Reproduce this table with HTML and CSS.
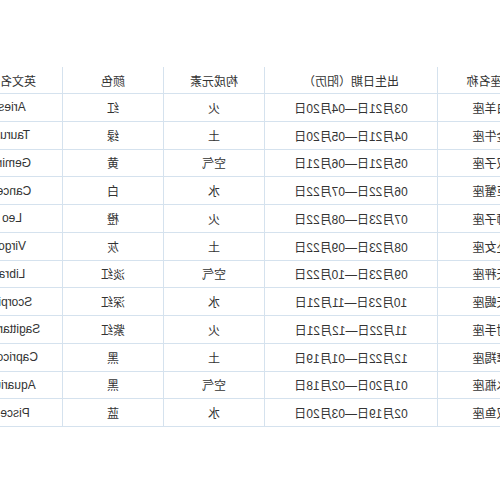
FILE: index.html
```html
<!DOCTYPE html>
<html lang="zh-CN">
<head>
<meta charset="utf-8">
<title>星座表</title>
<link rel="stylesheet" href="styles.css">
</head>
<body>
<div class="page">
  <table class="zodiac">
    <colgroup>
      <col class="c-name"><col class="c-date"><col class="c-elem"><col class="c-color"><col class="c-en">
    </colgroup>
    <thead>
      <tr><th>星座名称</th><th>出生日期（阳历）</th><th>构成元素</th><th>颜色</th><th>英文名称</th></tr>
    </thead>
    <tbody>
      <tr><td>白羊座</td><td>03月21日—04月20日</td><td>火</td><td>红</td><td>Aries</td></tr>
      <tr><td>金牛座</td><td>04月21日—05月20日</td><td>土</td><td>绿</td><td>Taurus</td></tr>
      <tr><td>双子座</td><td>05月21日—06月21日</td><td>空气</td><td>黄</td><td>Gemini</td></tr>
      <tr><td>巨蟹座</td><td>06月22日—07月22日</td><td>水</td><td>白</td><td>Cancer</td></tr>
      <tr><td>狮子座</td><td>07月23日—08月22日</td><td>火</td><td>橙</td><td>Leo</td></tr>
      <tr><td>处女座</td><td>08月23日—09月22日</td><td>土</td><td>灰</td><td>Virgo</td></tr>
      <tr><td>天秤座</td><td>09月23日—10月22日</td><td>空气</td><td>淡红</td><td>Libra</td></tr>
      <tr><td>天蝎座</td><td>10月23日—11月21日</td><td>水</td><td>深红</td><td>Scorpio</td></tr>
      <tr><td>射手座</td><td>11月22日—12月21日</td><td>火</td><td>紫红</td><td>Sagittarius</td></tr>
      <tr><td>摩羯座</td><td>12月22日—01月19日</td><td>土</td><td>黑</td><td>Capricorn</td></tr>
      <tr><td>水瓶座</td><td>01月20日—02月18日</td><td>空气</td><td>黑</td><td>Aquarius</td></tr>
      <tr><td>双鱼座</td><td>02月19日—03月20日</td><td>水</td><td>蓝</td><td>Pisces</td></tr>
    </tbody>
  </table>
</div>
</body>
</html>
```
FILE: styles.css
```css
html, body {
  margin: 0;
  padding: 0;
  background: #ffffff;
}
.page {
  width: 500px;
  height: 500px;
  overflow: hidden;
  transform: scaleX(-1);
  padding-top: 67px;
  box-sizing: border-box;
}
.zodiac {
  margin-left: -44px;
  border-collapse: collapse;
  table-layout: fixed;
  width: 582px;
  font-family: "Liberation Sans", Arial, "Noto Sans CJK SC", sans-serif;
  font-size: 12px;
  color: #333333;
}
.c-name { width: 106px; }
.c-date { width: 173px; }
.c-elem { width: 101px; }
.c-color { width: 101px; }
.c-en { width: 101px; }
.zodiac th,
.zodiac td {
  text-align: center;
  padding: 0;
  white-space: nowrap;
  overflow: hidden;
  border-left: 1px solid #d5e2ee;
  border-right: 1px solid #d5e2ee;
  border-bottom: 1px solid #d5e2ee;
  font-weight: normal;
}
.zodiac th {
  height: 26px;
}
.zodiac td {
  height: 26.75px;
}
```
